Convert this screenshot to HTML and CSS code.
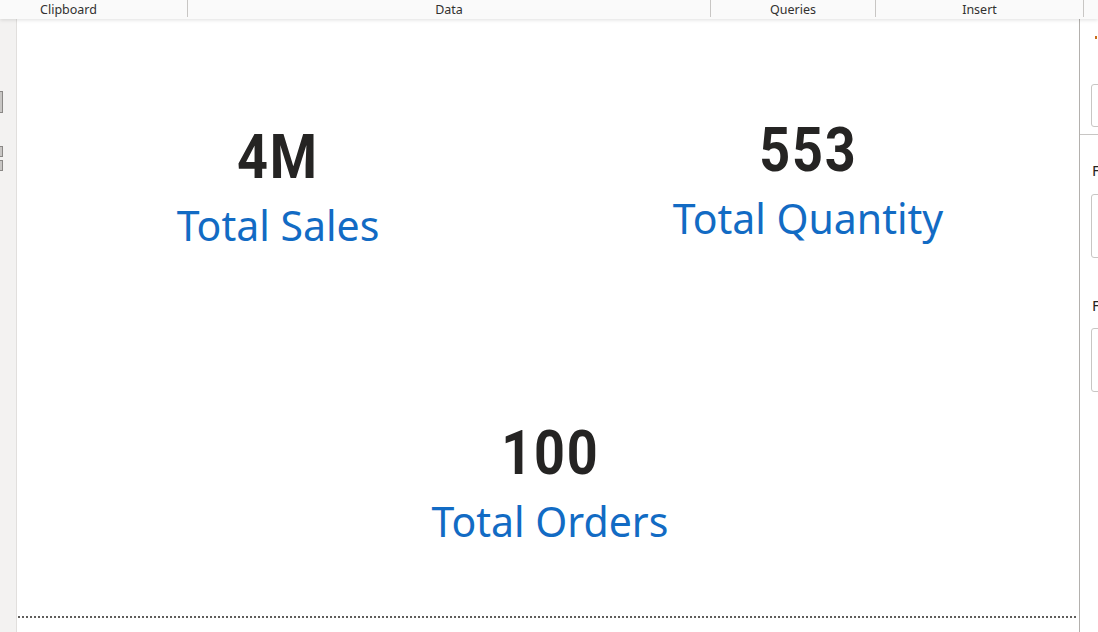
FILE: index.html
```html
<!DOCTYPE html>
<html>
<head>
<meta charset="utf-8">
<link rel="stylesheet" href="styles.css">
</head>
<body>
<div class="ribbon">
  <div class="rsec s-clip">Clipboard</div>
  <div class="rsec s-data">Data</div>
  <div class="rsec s-query">Queries</div>
  <div class="rsec s-insert">Insert</div>
  <div class="rsec s-rest"></div>
</div>
<div class="main">
  <div class="rail">
    <div class="rail-icon ri-1"></div>
    <div class="rail-icon ri-2"></div>
    <div class="rail-icon ri-3"></div>
  </div>
  <div class="canvas">
    <div class="row row-top">
      <div class="card card-sales">
        <div class="value">4M</div>
        <div class="label">Total Sales</div>
      </div>
      <div class="card card-qty">
        <div class="value">553</div>
        <div class="label">Total Quantity</div>
      </div>
    </div>
    <div class="row row-bottom">
      <div class="card card-orders">
        <div class="value">100</div>
        <div class="label">Total Orders</div>
      </div>
    </div>
    <div class="dots"></div>
  </div>
  <div class="pane">
    <div class="pane-dot"></div>
    <div class="pane-box pb-1"></div>
    <div class="pane-rule"></div>
    <div class="pane-label pl-1">F</div>
    <div class="pane-box pb-2"></div>
    <div class="pane-label pl-2">F</div>
    <div class="pane-box pb-3"></div>
  </div>
</div>
</body>
</html>
```
FILE: styles.css
```css
* { box-sizing: border-box; }
html, body {
  margin: 0;
  padding: 0;
  width: 1098px;
  height: 632px;
  overflow: hidden;
  background: #ffffff;
  font-family: "Noto Sans", "Open Sans", sans-serif;
}
.ribbon {
  position: relative;
  z-index: 2;
  display: flex;
  height: 19px;
  background: #fafafa;
  box-shadow: 0 1px 4px rgba(0,0,0,0.13);
}
.rsec {
  height: 17px;
  border-right: 1px solid #c8c6c4;
  font-size: 12.5px;
  line-height: 19px;
  color: #323130;
  text-align: center;
}
.s-clip { width: 188px; padding-right: 50px; }
.s-data { width: 523px; }
.s-query { width: 165px; }
.s-insert { width: 208px; }
.s-rest { flex: 1; border-right: none; }

.main {
  display: flex;
  height: 613px;
}
.rail {
  width: 17px;
  background: #f3f2f1;
  border-right: 1px solid #e1dfdd;
  display: flex;
  flex-direction: column;
}
.rail-icon {
  width: 3px;
  border: 1px solid #8a8886;
  border-left: none;
  background: #c8c6c4;
}
.ri-1 { height: 22px; margin-top: 72px; }
.ri-2 { height: 11px; margin-top: 33px; }
.ri-3 { height: 11px; margin-top: 3px; }

.canvas {
  flex: 1;
  display: flex;
  flex-direction: column;
  background: #ffffff;
}
.row { display: flex; }
.row-top { padding-left: 61px; gap: 130px; height: 302px; }
.row-bottom { padding-left: 333px; height: 295px; }
.card {
  width: 400px;
  display: flex;
  flex-direction: column;
  align-items: center;
}
.card-sales { padding-top: 108px; }
.card-qty { padding-top: 101px; }
.card-orders { padding-top: 102px; }
.value {
  font-family: "Roboto", "DejaVu Sans", sans-serif;
  font-weight: 700;
  font-size: 62px;
  line-height: 60px;
  color: #252423;
  letter-spacing: 2px;
  transform: scaleX(0.87);
}
.label {
  font-family: "Noto Sans", "Open Sans", sans-serif;
  font-size: 41px;
  line-height: 46px;
  color: #126bc4;
  margin-top: 15px;
}
.dots {
  margin-left: 1px;
  margin-right: 1px;
  height: 2px;
  background: repeating-linear-gradient(90deg, #605e5c 0 2px, transparent 2px 4px);
}

.pane {
  width: 19px;
  border-left: 1px solid #b3b0ad;
  display: flex;
  flex-direction: column;
  overflow: hidden;
}
.pane-dot {
  width: 2px;
  height: 3px;
  background: #c96e1a;
  margin-left: 15px;
  margin-top: 17px;
}
.pane-box {
  margin-left: 11px;
  width: 20px;
  border: 1px solid #c8c6c4;
  border-radius: 3px;
}
.pb-1 { height: 43px; margin-top: 45px; }
.pane-rule { height: 1px; background: #c8c6c4; margin-top: 7px; }
.pb-2 { height: 64px; margin-top: 14px; }
.pb-3 { height: 64px; margin-top: 13px; }
.pane-label {
  margin-left: 12px;
  font-size: 15px;
  line-height: 20px;
  color: #252423;
}
.pl-1 { margin-top: 25px; }
.pl-2 { margin-top: 37px; }
```
